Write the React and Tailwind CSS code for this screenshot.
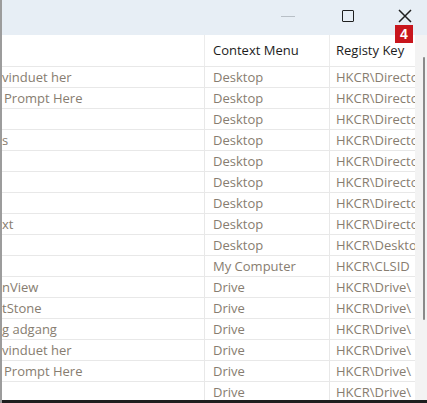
const rows = [
  ['vinduet her', 'Desktop', 'HKCR\\Directo'],
  ['Prompt Here', 'Desktop', 'HKCR\\Directo'],
  ['', 'Desktop', 'HKCR\\Directo'],
  ['s', 'Desktop', 'HKCR\\Directo'],
  ['', 'Desktop', 'HKCR\\Directo'],
  ['', 'Desktop', 'HKCR\\Directo'],
  ['', 'Desktop', 'HKCR\\Directo'],
  ['xt', 'Desktop', 'HKCR\\Directo'],
  ['', 'Desktop', 'HKCR\\Deskto'],
  ['', 'My Computer', 'HKCR\\CLSID'],
  ['nView', 'Drive', 'HKCR\\Drive\\'],
  ['tStone', 'Drive', 'HKCR\\Drive\\'],
  ['g adgang', 'Drive', 'HKCR\\Drive\\'],
  ['vinduet her', 'Drive', 'HKCR\\Drive\\'],
  ['Prompt Here', 'Drive', 'HKCR\\Drive\\'],
  ['', 'Drive', 'HKCR\\Drive\\'],
]

const lead = { 1: 'ml-[2px]', 14: 'ml-[2px]' }

export default function App() {
  return (
    <div className="w-[427px] h-[403px] overflow-hidden bg-white flex flex-col border-l-2 border-[#9c9c9c] font-['Open_Sans',sans-serif]">
      {/* title bar */}
      <div className="h-[35px] shrink-0 bg-[#e7eef5] relative flex items-start justify-end">
        <div className="w-[14px] h-px bg-[#b8bfc6] mt-[16px] mr-[47px]" />
        <div className="w-[12px] h-[12px] border-[1.5px] border-[#1f1f1f] rounded-[1px] mt-[10px] mr-[44px]" />
        <svg className="mt-[9px] mr-[15px]" width="14" height="14" viewBox="0 0 14 14">
          <path d="M1 1 L13 13 M13 1 L1 13" stroke="#1f1f1f" strokeWidth="1.5" />
        </svg>
        <div className="absolute right-[14px] top-[25px] w-[18px] h-[18px] bg-[#c8161d] text-white text-[14px] font-bold leading-[18px] text-center font-['Liberation_Sans',sans-serif]">
          4
        </div>
      </div>

      <div className="flex flex-1 min-h-0">
        <div className="flex-1 min-w-0 flex flex-col">
          {/* header */}
          <div className="h-[31px] shrink-0 flex text-[13px] text-[#1c1c1c]">
            <div className="w-[203px] border-r border-[#ececec]" />
            <div className="w-[125px] border-r border-[#ececec] pl-[8px] pt-[6px]">Context Menu</div>
            <div className="flex-1 pl-[6px] pt-[6px] whitespace-nowrap overflow-hidden">Registy Key</div>
          </div>
          {rows.map((r, i) => (
            <div key={i} className="h-[21px] shrink-0 flex text-[13px] text-[#877d70] border-t border-[#e8e8e8] leading-[20px]">
              <div className="w-[203px] border-r border-[#e8e8e8] overflow-hidden whitespace-nowrap">
                <span className={lead[i] ? `inline-block ${lead[i]}` : 'inline-block'}>{r[0]}</span>
              </div>
              <div className="w-[125px] border-r border-[#e8e8e8] pl-[8px] whitespace-nowrap overflow-hidden">{r[1]}</div>
              <div className="flex-1 pl-[6px] whitespace-nowrap overflow-hidden">{r[2]}</div>
            </div>
          ))}
        </div>
        {/* scrollbar */}
        <div className="w-[12px] shrink-0 bg-[#f3f3f3] relative flex justify-end pr-[2px] pt-[22px]">
          <div className="w-[2px] h-[263px] bg-[#8a8a8a] rounded-full" />
        </div>
      </div>
      <div className="h-[3px] shrink-0 bg-[#1e1e1e]" />
    </div>
  )
}
